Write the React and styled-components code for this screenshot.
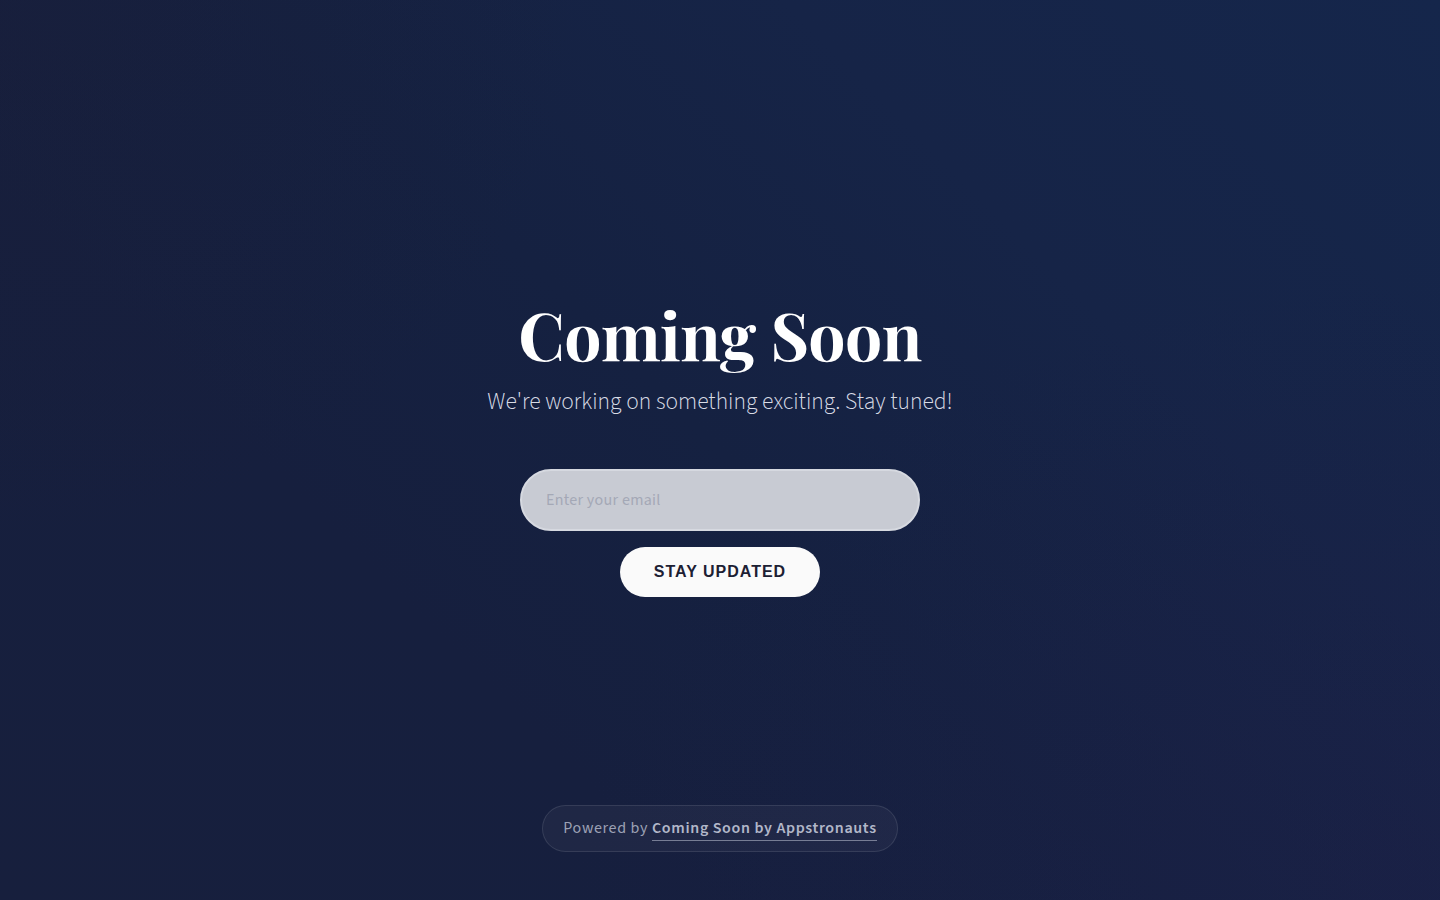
import React, { useState } from 'react';
import styled, { createGlobalStyle } from 'styled-components';

const GlobalStyle = createGlobalStyle`
  html, body {
    margin: 0;
    padding: 0;
    height: 100%;
  }
  * {
    box-sizing: border-box;
  }
`;

const Page = styled.div`
  position: relative;
  height: 100vh;
  display: flex;
  flex-direction: column;
  align-items: center;
  justify-content: center;
  background:
    radial-gradient(
      ellipse 60% 70% at 100% 100%,
      rgba(32, 30, 72, 0.4) 0%,
      rgba(32, 30, 72, 0) 100%
    ),
    radial-gradient(
      ellipse 40% 60% at 0% 0%,
      rgba(26, 30, 56, 0.45) 0%,
      rgba(26, 30, 56, 0) 100%
    ),
    linear-gradient(
      45deg,
      #171f3d 0%,
      #161f3e 30%,
      #152141 50%,
      #162447 72%,
      #15264b 100%
    );
  font-family: "Source Sans 3", "Source Sans Pro", "Lato", "Noto Sans", sans-serif;
  overflow: hidden;
`;

const Main = styled.main`
  display: flex;
  flex-direction: column;
  align-items: center;
`;

const Title = styled.h1`
  margin: -3px 0 0;
  font-family: "Playfair Display", "Liberation Serif", serif;
  font-weight: 700;
  font-size: 66px;
  line-height: 1;
  color: #ffffff;
  letter-spacing: -0.6px;
`;

const Subtitle = styled.p`
  margin: 18px 0 0;
  font-size: 23.5px;
  font-weight: 300;
  color: #d9dce6;
`;

const Form = styled.form`
  display: flex;
  flex-direction: column;
  align-items: center;
  gap: 16px;
  margin-top: 51px;
`;

const EmailInput = styled.input`
  width: 400px;
  height: 62px;
  padding: 0 24px;
  border-radius: 999px;
  border: 2px solid #d6d9e0;
  background: #c8cbd3;
  font-family: "Source Sans 3", "Source Sans Pro", "Lato", "Noto Sans", sans-serif;
  font-size: 16px;
  letter-spacing: 0.3px;
  color: #1c2033;
  outline: none;

  &::placeholder {
    color: #a4a8b6;
  }
`;

const SubmitButton = styled.button`
  width: 200px;
  height: 50px;
  border: none;
  border-radius: 999px;
  background: #fafafa;
  color: #1c2033;
  font-family: "Liberation Sans", Arial, sans-serif;
  font-weight: 700;
  font-size: 16px;
  letter-spacing: 1px;
  cursor: pointer;
`;

const Footer = styled.footer`
  position: absolute;
  bottom: 48px;
  left: 0;
  right: 0;
  display: flex;
  justify-content: center;
`;

const Badge = styled.div`
  height: 47px;
  line-height: 45px;
  padding: 0 20px;
  border-radius: 999px;
  border: 1px solid rgba(255, 255, 255, 0.1);
  background: rgba(255, 255, 255, 0.04);
  font-size: 16px;
  color: #9ca1b4;
  letter-spacing: 0.65px;
  white-space: nowrap;
`;

const BadgeLink = styled.a`
  color: #b2b7c9;
  font-weight: 600;
  text-decoration: none;
  padding-bottom: 1px;
  border-bottom: 1px solid rgba(178, 183, 201, 0.6);
`;

export default function App() {
  const [email, setEmail] = useState('');

  return (
    <Page>
      <GlobalStyle />
      <Main>
        <Title>Coming Soon</Title>
        <Subtitle>We're working on something exciting. Stay tuned!</Subtitle>
        <Form onSubmit={(e) => e.preventDefault()}>
          <EmailInput
            type="email"
            placeholder="Enter your email"
            value={email}
            onChange={(e) => setEmail(e.target.value)}
          />
          <SubmitButton type="submit">STAY UPDATED</SubmitButton>
        </Form>
      </Main>
      <Footer>
        <Badge>
          Powered by <BadgeLink href="#">Coming Soon by Appstronauts</BadgeLink>
        </Badge>
      </Footer>
    </Page>
  );
}
